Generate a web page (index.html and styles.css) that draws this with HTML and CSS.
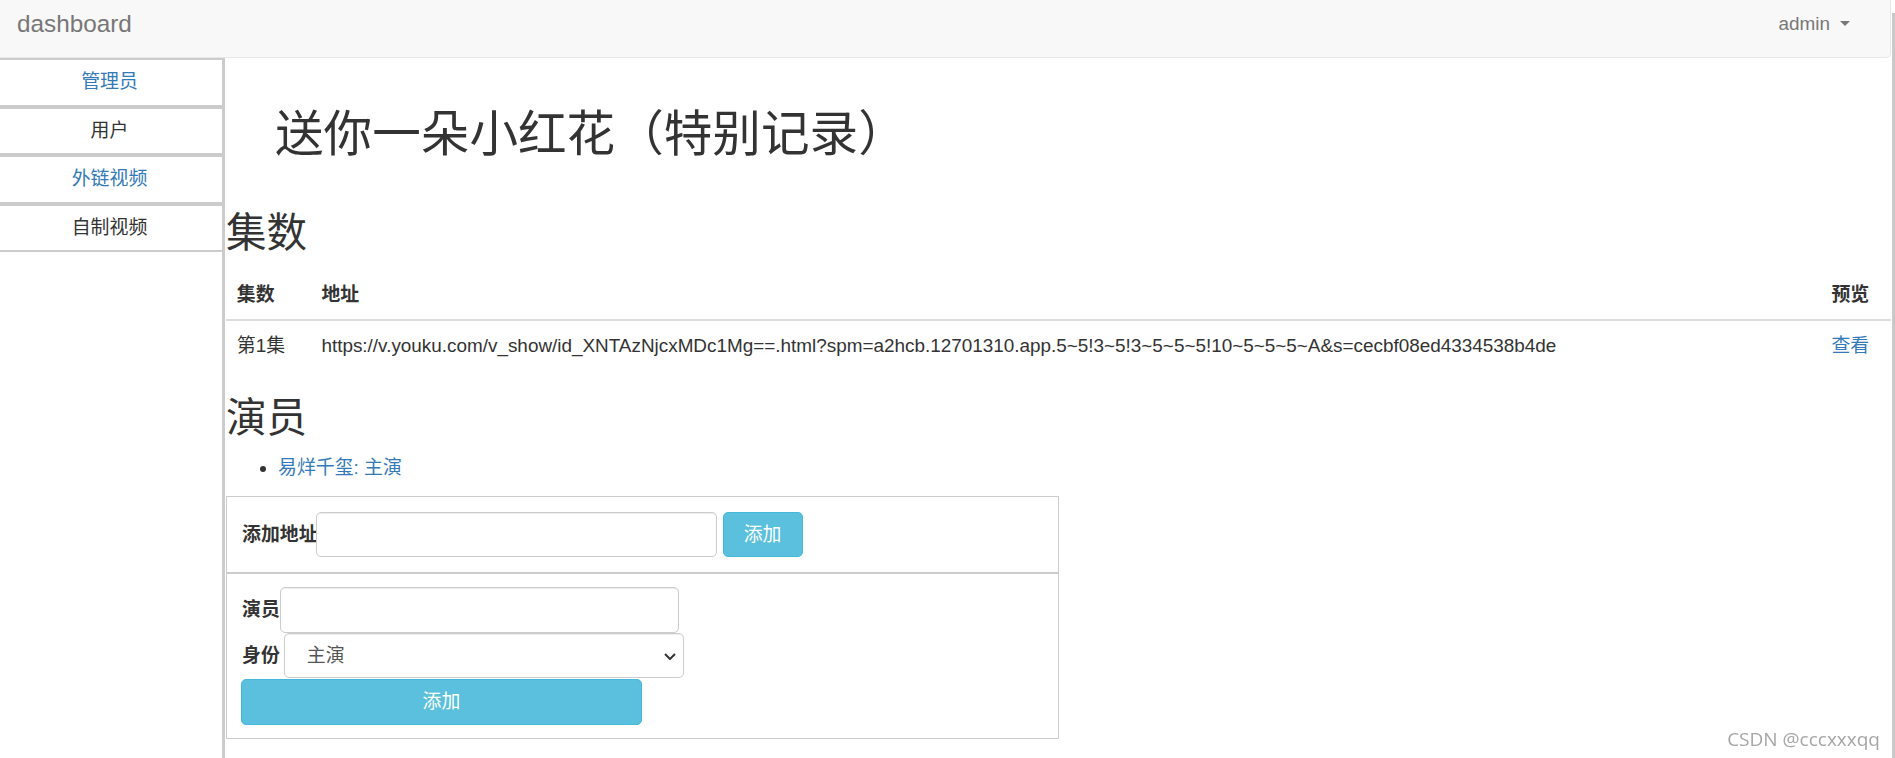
FILE: index.html
```html
<!DOCTYPE html>
<html lang="zh-CN">
<head>
  <meta charset="UTF-8">
  <title>dashboard</title>
  <link rel="stylesheet" href="styles.css">
</head>
<body>
  <header class="navbar">
    <a class="brand" href="#">dashboard</a>
    <div class="user">admin <span class="caret"></span></div>
  </header>

  <div class="layout">
    <aside class="sidebar">
      <a class="side-item blue" href="#">管理员</a>
      <a class="side-item" href="#">用户</a>
      <a class="side-item blue" href="#">外链视频</a>
      <a class="side-item" href="#">自制视频</a>
    </aside>

    <main class="content">
      <div class="hero">
        <h1>送你一朵小红花（特别记录）</h1>
      </div>

      <h2 class="episodes-title">集数</h2>
      <table class="table">
        <colgroup>
          <col class="col-num">
          <col>
          <col class="col-view">
        </colgroup>
        <thead>
          <tr>
            <th>集数</th>
            <th>地址</th>
            <th>预览</th>
          </tr>
        </thead>
        <tbody>
          <tr>
            <td>第1集</td>
            <td>https://v.youku.com/v_show/id_XNTAzNjcxMDc1Mg==.html?spm=a2hcb.12701310.app.5~5!3~5!3~5~5~5!10~5~5~5~A&amp;s=cecbf08ed4334538b4de</td>
            <td><a href="#">查看</a></td>
          </tr>
        </tbody>
      </table>

      <h2 class="cast-title">演员</h2>
      <ul class="actors">
        <li><a href="#">易烊千玺: 主演</a></li>
      </ul>

      <div class="panel">
        <form class="row">
          <label>添加地址</label>
          <input class="field url-field" type="text">
          <button class="btn btn-small" type="button">添加</button>
        </form>
      </div>

      <div class="panel panel-actor">
        <form>
          <div class="row">
            <label>演员</label>
            <input class="field actor-field" type="text">
          </div>
          <div class="row">
            <label>身份</label>
            <span class="select-wrap">
              <select class="field role-field">
                <option>主演</option>
                <option>配角</option>
              </select>
              <svg class="chevron" width="12" height="7" viewBox="0 0 12 7"><path d="M1 1 L6 6 L11 1" fill="none" stroke="#333" stroke-width="2"/></svg>
            </span>
          </div>
          <button class="btn btn-wide" type="button">添加</button>
        </form>
      </div>
    </main>
  </div>

  <div class="scroll-edge"></div>
  <div class="watermark">CSDN @cccxxxqq</div>
</body>
</html>
```

FILE: styles.css
```css
html, body {
  margin: 0;
  padding: 0;
}

body {
  font-family: "Liberation Sans", "Noto Sans CJK SC", sans-serif;
  font-size: 18.9px;
  line-height: 27px;
  color: #333;
  background: #fff;
}

a {
  color: #337ab7;
  text-decoration: none;
}

.navbar {
  display: flex;
  justify-content: space-between;
  align-items: flex-start;
  height: 58px;
  box-sizing: border-box;
  padding-top: 10px;
  margin-right: 4px;
  background: #f8f8f8;
  border-right: 1px solid #e7e7e7;
  border-bottom: 1px solid #e7e7e7;
  border-bottom-right-radius: 5px;
}

.brand {
  margin-left: 17px;
  font-size: 24.3px;
  line-height: 27px;
  color: #777;
}

.user {
  display: flex;
  align-items: center;
  margin-right: 40px;
  color: #777;
}

.caret {
  width: 0;
  height: 0;
  margin-left: 10px;
  border-top: 5px solid #777;
  border-left: 5px solid transparent;
  border-right: 5px solid transparent;
}

.layout {
  display: flex;
  margin-right: 4px;
  min-height: 700px;
}

.sidebar {
  width: 222px;
  flex: none;
}

.side-item {
  display: block;
  height: 44.5px;
  line-height: 44.5px;
  padding-right: 3px;
  border-top: 2px solid #ccc;
  border-bottom: 2px solid #ccc;
  text-align: center;
  color: #333;
}

.side-item.blue {
  color: #337ab7;
}

.content {
  flex: 1;
  min-width: 0;
  border-left: 3px solid #ccc;
  padding-left: 1px;
}

.hero {
  padding: 46px 0 0 49px;
}

h1 {
  margin: 0;
  font-size: 48.6px;
  line-height: 60px;
  font-weight: normal;
}

h2 {
  font-size: 40.5px;
  line-height: 44.5px;
  font-weight: normal;
  margin: 0;
}

.episodes-title {
  margin: 47px 0 14.7px;
}

.cast-title {
  margin-bottom: 13.5px;
}

.table {
  width: 100%;
  border-collapse: collapse;
  table-layout: fixed;
  margin-bottom: 27px;
}

.col-num {
  width: 84.6px;
}

.col-view {
  width: 70.4px;
}

.table th, .table td {
  padding: 10.8px;
  line-height: 27px;
  text-align: left;
  vertical-align: middle;
  white-space: nowrap;
}

.table th {
  font-weight: bold;
  border-bottom: 2.7px solid #ddd;
}

.actors {
  margin: 0 0 14.2px;
  padding-left: 52px;
}

.panel {
  width: 833px;
  box-sizing: border-box;
  border: 1px solid #ccc;
  padding: 15px;
}

.panel-actor {
  padding: 13px 15px;
}

.row {
  display: flex;
  align-items: center;
}

label {
  font-weight: bold;
}

.field {
  box-sizing: border-box;
  border: 1px solid #ccc;
  border-radius: 5px;
  box-shadow: inset 0 1px 1px rgba(0, 0, 0, .075);
  background: #fff;
  font: inherit;
  color: #555;
  padding: 0 15px;
}

.url-field {
  width: 401px;
  height: 45px;
  margin-left: -2px;
}

.actor-field {
  width: 399px;
  height: 46px;
}

.select-wrap {
  position: relative;
  display: block;
  margin-left: 4px;
}

.role-field {
  display: block;
  width: 400px;
  height: 45px;
  padding-left: 22px;
  appearance: none;
  -webkit-appearance: none;
}

.chevron {
  position: absolute;
  right: 8px;
  top: 20px;
}

.btn {
  box-sizing: border-box;
  background: #5bc0de;
  border: 1px solid #46b8da;
  border-radius: 5px;
  color: #fff;
  font: inherit;
  cursor: pointer;
}

.btn-small {
  width: 80px;
  height: 45px;
  margin-left: 6px;
}

.btn-wide {
  display: block;
  width: 401px;
  height: 46px;
  margin: 1px 0 0 -1px;
}

.scroll-edge {
  position: fixed;
  top: 13px;
  right: 0;
  bottom: 0;
  width: 3px;
  background: #c9c9c9;
}

.watermark {
  position: fixed;
  right: 15px;
  bottom: 9px;
  font-family: "Open Sans", sans-serif;
  font-size: 19px;
  line-height: 19px;
  color: #a6a6a6;
}
```
